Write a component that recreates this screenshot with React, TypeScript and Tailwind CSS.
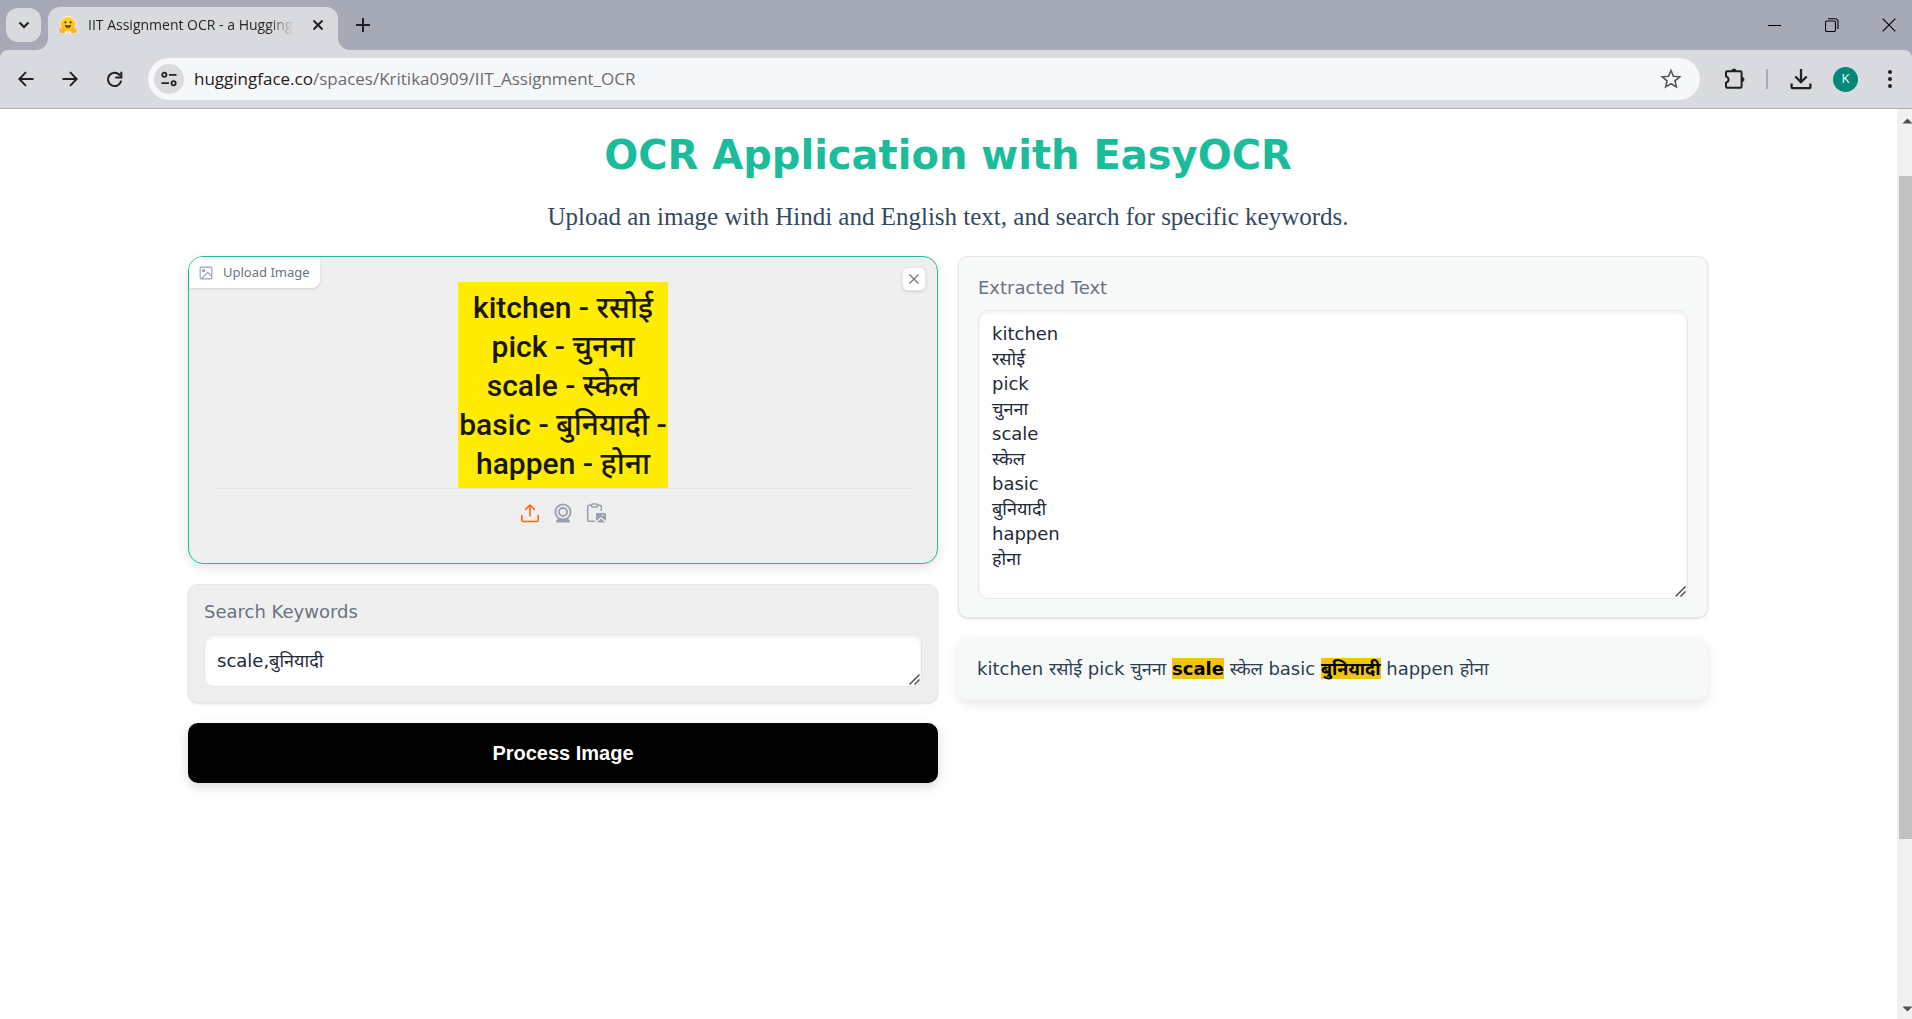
import React from "react";

const EXTRACTED = "kitchen\nरसोई\npick\nचुनना\nscale\nस्केल\nbasic\nबुनियादी\nhappen\nहोना";
const IMAGE_LINES = ["kitchen - रसोई", "pick - चुनना", "scale - स्केल", "basic - बुनियादी -", "happen - होना"];

function FaceLogo() {
  return (
    <svg viewBox="0 0 20 20" className="size-5 shrink-0" aria-hidden="true">
      <path d="M10 1a7.6 7.6 0 0 0-7.6 7.6c0 1.400.3 2.500.700 3.500L1.300 15.500 3 18.500h5l2-1.500 2 1.500h5l1.700-3-1.800-3.400c.4-1 .7-2.100.7-3.500A7.600 7.600 0 0 0 10 1z" fill="#fff4c9" />
      <circle cx="10" cy="9" r="7" fill="#ffd21e" />
      <path d="M10 16a7 7 0 0 0 7-7 7 7 0 0 0-.6-2.800A7.500 7.500 0 0 1 3.600 6.200 7 7 0 0 0 3 9a7 7 0 0 0 7 7z" fill="#ffc517" />
      <path d="M2.200 13.200c.7-.7 1.500.1 2.100.8l-.1-1.600c.2-.9 1.300-.7 1.600.1l1.500 2.600c.8 1.500.1 3-1.800 3.200-2 .2-3.400-.6-4-2.300-.4-1 .1-1.800.7-2.800z" fill="#ffb01f" />
      <path d="M17.800 13.200c-.7-.7-1.500.1-2.100.8l.1-1.600c-.2-.9-1.300-.7-1.600.1l-1.500 2.600c-.8 1.500-.1 3 1.800 3.200 2 .2 3.400-.6 4-2.300.4-1-.1-1.800-.7-2.800z" fill="#ffb01f" />
      <circle cx="7.400" cy="7.300" r="1.100" fill="#3a3b45" />
      <circle cx="12.600" cy="7.300" r="1.100" fill="#3a3b45" />
      <path d="M7 9.800c1.900.8 4.100.8 6 0-.1 2-1.300 3.400-3 3.400S7.100 11.800 7 9.800z" fill="#3a3b45" />
      <path d="M8.300 12.200c.8-1 2.600-1 3.400 0-.8 1.200-2.600 1.200-3.400 0z" fill="#f0413c" />
    </svg>
  );
}

function ResizeGrip() {
  return (
    <svg viewBox="0 0 11 11" aria-hidden="true" className="pointer-events-none absolute bottom-0.5 right-0.5 size-[11px]" fill="none" stroke="#505050" strokeWidth="1.500">
      <path d="M.5 10.500l10-10M5.500 10.500l5-5" />
    </svg>
  );
}

function TabStrip() {
  return (
    <div className="flex h-[50px] bg-[#a6aab7] pl-1.5 text-[#1f2023]">
      <button aria-label="Search tabs" className="mt-2 flex h-[34px] w-[35px] items-center justify-center rounded-xl bg-[#d9dadf]">
        <svg viewBox="0 0 12 12" className="size-3" fill="none" stroke="currentColor" strokeWidth="2.200"><path d="M1.500 3.500 6 8l4.500-4.500" /></svg>
      </button>
      <div className="relative ml-[7px] mt-[7px] flex w-[290px] items-center rounded-t-xl bg-[#d9dadf] pb-2 pl-2.5 pr-2.5">
        <span className="absolute -left-3 bottom-0 size-3 overflow-hidden"><span className="block size-full rounded-br-xl shadow-[6px_6px_0_6px_#d9dadf]" /></span>
        <span className="absolute -right-3 bottom-0 size-3 overflow-hidden"><span className="block size-full rounded-bl-xl shadow-[-6px_6px_0_6px_#d9dadf]" /></span>
        <FaceLogo />
        <span className="ml-2.5 mr-auto whitespace-nowrap bg-gradient-to-r from-[#1f2023] from-88% to-transparent bg-clip-text font-['Open_Sans',sans-serif] text-sm text-transparent">IIT Assignment OCR - a Hugging</span>
        <button aria-label="Close tab" className="flex size-5 items-center justify-center">
          <svg viewBox="0 0 12 12" className="size-3" fill="none" stroke="currentColor" strokeWidth="1.900"><path d="m1.500 1.500 9 9m0-9-9 9" /></svg>
        </button>
      </div>
      <button aria-label="New tab" className="mb-1 ml-[15px] flex w-5 items-center justify-center">
        <svg viewBox="0 0 14 14" className="mt-1 size-3.5" fill="none" stroke="currentColor" strokeWidth="2"><path d="M7 0v14M0 7h14" /></svg>
      </button>
      <div className="ml-auto flex h-[49px] items-center gap-[43px] pr-4 text-black">
        <button aria-label="Minimize"><svg viewBox="0 0 14 14" className="size-3.5" stroke="currentColor"><path d="M0 7.500h13" /></svg></button>
        <button aria-label="Restore"><svg viewBox="0 0 14 14" className="size-3.5" fill="none" stroke="currentColor" strokeWidth="1.100"><rect x=".5" y="3" width="10" height="10.500" rx="1.500" /><path d="M3 .8h7.500a2.500 2.500 0 0 1 2.500 2.500V11" /></svg></button>
        <button aria-label="Close window"><svg viewBox="0 0 14 14" className="size-3.5" stroke="currentColor" strokeWidth="1.200"><path d="m.7.7 12.600 12.600m0-12.600L.7 13.300" /></svg></button>
      </div>
    </div>
  );
}

function Toolbar() {
  return (
    <div className="bg-[#a6aab7]">
      <div className="flex h-[59px] items-center rounded-t-lg border-b border-[#aeaeb4] bg-[#d9dadf] pl-[18px] pr-3 text-[#1f2023]">
        <div className="flex gap-7">
          <button aria-label="Back"><svg viewBox="0 0 16 16" className="size-4" fill="none" stroke="currentColor" strokeWidth="1.900"><path d="M15.500 8H1.500M8 1.200 1.300 8 8 14.800" /></svg></button>
          <button aria-label="Forward"><svg viewBox="0 0 16 16" className="size-4" fill="none" stroke="currentColor" strokeWidth="1.900"><path d="M.5 8h14M8 1.200 14.700 8 8 14.800" /></svg></button>
          <button aria-label="Reload"><svg viewBox="0 0 16 16" className="size-[17px]" fill="none" stroke="currentColor" strokeWidth="1.900"><path d="M13.300 4.300A6.300 6.300 0 1 0 14.300 9" /><path d="M14.400.6v5.600H8.800" /></svg></button>
        </div>
        <div className="ml-[25px] flex h-[42px] flex-1 items-center rounded-full bg-[#f6f7f9] pl-1.5 pr-[18px]">
          <button aria-label="View site information" className="flex size-[30px] items-center justify-center rounded-full bg-[#d9dadf]">
            <svg viewBox="0 0 16 16" className="size-4" fill="none" stroke="currentColor" strokeWidth="1.800"><circle cx="3.300" cy="3.800" r="2.100" /><path d="M8 3.800h7.500M.5 12.200H8" /><circle cx="12.600" cy="12.200" r="2.100" /></svg>
          </button>
          <a href="https://huggingface.co/spaces/Kritika0909/IIT_Assignment_OCR" className="ml-2.5 font-['Open_Sans',sans-serif] text-[17px] text-[#1f2023]">huggingface.co<span className="text-[#6a6c70]">/spaces/Kritika0909/IIT_Assignment_OCR</span></a>
          <button aria-label="Bookmark this tab" className="ml-auto text-[#55575c]">
            <svg viewBox="0 0 20 20" className="size-[22px]" fill="none" stroke="currentColor" strokeWidth="1.500"><path d="m10 2.300 2.200 5.200 5.700.5-4.300 3.700 1.300 5.500L10 14.300l-4.900 2.900 1.300-5.500L2.100 8l5.700-.5z" /></svg>
          </button>
        </div>
        <button aria-label="Extensions" className="ml-6">
          <svg viewBox="0 0 22 22" className="size-[22px]" fill="none" stroke="currentColor" strokeWidth="2"><path d="M2 4.500A1.200 1.200 0 0 1 3.200 3.300h13.200a1.200 1.200 0 0 1 1.200 1.200v14a1.200 1.200 0 0 1-1.200 1.200H3.200A1.200 1.200 0 0 1 2 18.500v-3.700a3.300 3.300 0 0 0 0-6.400z" /><path d="M7.700 3a2.200 2.200 0 0 1 4.400 0zM18 9.300a2.200 2.200 0 0 1 0 4.400z" fill="currentColor" strokeWidth=".5" /></svg>
        </button>
        <span className="ml-5 h-5 w-0.5 bg-[#a6aab7]" />
        <button aria-label="Downloads" className="ml-[22px]">
          <svg viewBox="0 0 22 22" className="size-[22px]" fill="none" stroke="currentColor" strokeWidth="2.300"><path d="M11 1v13M5.300 8.500 11 14.200l5.700-5.700M1.600 15.500v3.200c0 .9.600 1.500 1.500 1.500h15.800c.9 0 1.500-.6 1.500-1.500v-3.200" /></svg>
        </button>
        <button aria-label="Profile" className="ml-[21px] flex size-[25px] items-center justify-center rounded-full bg-[#00897b] font-['Open_Sans',sans-serif] text-[13px] text-white">K</button>
        <button aria-label="Menu" className="ml-[22px]">
          <svg viewBox="0 0 20 20" className="size-5" fill="currentColor"><circle cx="10" cy="3" r="2" /><circle cx="10" cy="10" r="2" /><circle cx="10" cy="17" r="2" /></svg>
        </button>
      </div>
    </div>
  );
}

function UploadCard() {
  return (
    <section className="relative flex h-[308px] flex-col items-center rounded-[15px] border border-[#1abc9c] bg-[#efefef] px-[25px] pt-[25px] shadow-[0_4px_12px_rgba(0,0,0,0.1)]">
      <div className="absolute left-0 top-0 flex h-[31px] items-center gap-2.5 rounded-br-lg rounded-tl-[14px] bg-white pl-2.5 pr-2.5 font-['Noto_Sans',sans-serif] text-[13px] text-gray-500 shadow-sm">
        <svg viewBox="0 0 24 24" className="size-3.5 text-gray-400" fill="none" stroke="currentColor" strokeWidth="2"><rect x="2" y="2" width="20" height="20" rx="2" /><circle cx="8" cy="8" r="1.800" fill="currentColor" /><path d="m5 21 10-10 7 7" /></svg>
        Upload Image
      </div>
      <button aria-label="Clear" className="absolute right-[11px] top-2.5 flex size-6 items-center justify-center rounded-md border border-gray-200 bg-white text-gray-500 shadow-sm">
        <svg viewBox="0 0 12 12" className="size-3" stroke="currentColor" strokeWidth="1.200"><path d="m1.500 1.500 9 9m0-9-9 9" /></svg>
      </button>
      <div className="h-[206px] w-[210px] whitespace-nowrap bg-[#ffec00] pt-1.5 text-center font-['Roboto','Noto_Sans',sans-serif] text-[30px] font-medium leading-[39px] text-[#191703]">
        {IMAGE_LINES.map((line) => (
          <div key={line} className="flex justify-center">{line}</div>
        ))}
      </div>
      <div className="flex w-full justify-center gap-[13px] border-t border-[#e5e5e7] pt-3.5 text-gray-400">
        <button aria-label="Upload file" className="text-orange-500">
          <svg viewBox="0 0 20 20" className="size-5" fill="none" stroke="currentColor" strokeWidth="1.600" strokeLinecap="round" strokeLinejoin="round"><path d="M10 13V2M5.500 6.500 10 2l4.500 4.500M1.800 12.500V17a1.500 1.500 0 0 0 1.500 1.500h13.400a1.500 1.500 0 0 0 1.500-1.500v-4.500" /></svg>
        </button>
        <button aria-label="Capture from camera">
          <svg viewBox="0 0 20 20" className="size-5" fill="none" stroke="currentColor" strokeWidth="1.900"><circle cx="10" cy="9" r="7.600" /><circle cx="10" cy="9" r="4" /><path d="M5.300 15.500h9.400l2 2v2H3.300v-2z" fill="currentColor" stroke="none" /></svg>
        </button>
        <button aria-label="Paste from clipboard">
          <svg viewBox="0 0 20 20" className="size-5" fill="none" stroke="currentColor" strokeWidth="1.500"><path d="M9 18.300H3A1.300 1.300 0 0 1 1.700 17V3.500A1.300 1.300 0 0 1 3 2.200h2.500m6 0H14a1.300 1.300 0 0 1 1.300 1.300V8" /><rect x="5.500" y="1" width="6" height="3" rx="1" /><path fillRule="evenodd" d="M11 10h7.500A1.500 1.500 0 0 1 20 11.500V18l-5-4-5 4v-6.500A1.500 1.500 0 0 1 11 10zm5 1.500v1.500h1.500v-1.500z" fill="currentColor" stroke="none" /><path d="m15 15.500 4 4h-8z" fill="currentColor" stroke="none" /></svg>
        </button>
      </div>
    </section>
  );
}

function ScrollBar() {
  return (
    <div aria-hidden="true" className="flex w-[15px] shrink-0 flex-col overflow-hidden bg-[#f1f1f1] pl-0.5 text-[#505050]">
      <svg viewBox="0 0 13 67" className="h-[67px] w-[13px]" fill="currentColor"><path d="m3.500 14.500 5-5 5 5z" /></svg>
      <span className="h-[663px] bg-[#c1c1c1]" />
      <svg viewBox="0 0 13 17" className="mt-auto h-[17px] w-[13px]" fill="currentColor"><path d="m3.500 4.500 5 5 5-5z" /></svg>
    </div>
  );
}

export default function App() {
  return (
    <div className="flex min-h-screen flex-col bg-white">
      <header>
        <TabStrip />
        <Toolbar />
      </header>
      <div className="flex flex-1">
        <main className="min-w-0 flex-1 pl-8 pr-[33px] font-['DejaVu_Sans','Noto_Sans',sans-serif] text-lg">
          <h1 className="pt-[22px] text-center text-[40px] font-bold leading-[48px] text-[#1abc9c]">OCR Application with EasyOCR</h1>
          <p className="mt-[22px] text-center font-['Liberation_Serif',serif] text-[25px] leading-8 text-[#34495e]">Upload an image with Hindi and English text, and search for specific keywords.</p>
          <div className="mx-auto mt-[23px] grid max-w-[1520px] grid-cols-2 items-start gap-5">
            <div className="flex flex-col gap-5">
              <UploadCard />
              <section className="rounded-[10px] border border-gray-200 bg-[#efefef] px-[15px] pb-[15px] pt-[13px] shadow-sm">
                <label htmlFor="keywords" className="block leading-7 text-gray-500">Search Keywords</label>
                <div className="relative mt-2">
                  <textarea id="keywords" rows={1} defaultValue="scale,बुनियादी" className="block h-[53px] w-full resize-none overflow-hidden rounded-[10px] border border-gray-200 bg-white px-3 py-[13px] leading-[25px] text-gray-800 shadow-[inset_0_2px_4px_rgba(0,0,0,0.06)]" />
                  <ResizeGrip />
                </div>
              </section>
              <button className="h-[60px] rounded-[10px] bg-black font-['Liberation_Sans',sans-serif] text-xl font-bold text-white shadow-[0_4px_12px_rgba(0,0,0,0.15)]">Process Image</button>
            </div>
            <div className="flex flex-col gap-5">
              <section className="rounded-[10px] border border-gray-200 bg-[#f7f9f9] px-[19px] pb-[18px] pt-[17px] shadow-sm">
                <label htmlFor="extracted" className="block leading-7 text-gray-500">Extracted Text</label>
                <div className="relative mt-2">
                  <textarea id="extracted" defaultValue={EXTRACTED} className="block h-[289px] w-full resize-none overflow-hidden rounded-[10px] border border-gray-200 bg-white px-[13px] py-2.5 leading-[25px] text-gray-800 shadow-[inset_0_2px_4px_rgba(0,0,0,0.06)]" />
                  <ResizeGrip />
                </div>
              </section>
              <p className="rounded-[10px] bg-[#f7f9f9] px-[19px] py-[17px] leading-7 text-[#2c3e50] shadow-[0_4px_12px_rgba(0,0,0,0.1)]">
                kitchen रसोई pick चुनना <mark className="bg-[#f1c40f] font-bold text-black">scale</mark> स्केल basic <mark className="bg-[#f1c40f] font-bold text-black">बुनियादी</mark> happen होना
              </p>
            </div>
          </div>
        </main>
        <ScrollBar />
      </div>
    </div>
  );
}
